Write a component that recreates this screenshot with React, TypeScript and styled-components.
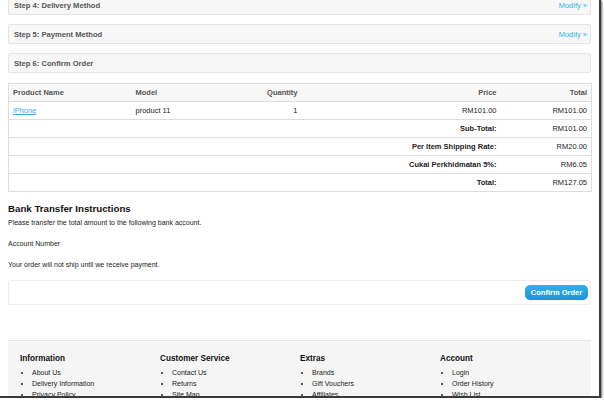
import React from "react";
import styled, { createGlobalStyle } from "styled-components";

const Global = createGlobalStyle`
  html, body { margin: 0; padding: 0; background: #ffffff; }
  body { font-family: "Liberation Sans", Arial, sans-serif; color: #333; }
`;

const Frame = styled.div`
  width: 601px;
  height: 398px;
  overflow: hidden;
  background: #fff;
  box-sizing: border-box;
  border-right: 2px solid #3a3a3a;
  border-bottom: 2px solid #3a3a3a;
  box-shadow: 1px 1px 2px rgba(0, 0, 0, 0.6);
`;

const Page = styled.div`
  margin-top: -5px;
  padding: 0 8px 0 8px;
  display: flex;
  flex-direction: column;
`;

const StepPanel = styled.div`
  height: 20px;
  box-sizing: border-box;
  background: #f7f7f7;
  border: 1px solid #e4e4e4;
  border-radius: 2px;
  display: flex;
  align-items: center;
  justify-content: space-between;
  padding: 0 3px 0 5px;
  margin-bottom: 9px;
`;

const StepTitle = styled.span`
  font-size: 7.6px;
  font-weight: bold;
  color: #555;
`;

const Modify = styled.span`
  font-size: 7.5px;
  color: #38b0e3;
`;

const Table = styled.table`
  width: 583px;
  border-collapse: collapse;
  border: 1px solid #dddddd;
  margin-top: 1px;
  font-size: 7.5px;
  table-layout: fixed;
`;

const Th = styled.td<{ $align?: string }>`
  height: 17px;
  padding: 0 4px;
  background: #f7f7f7;
  color: #555;
  font-weight: bold;
  text-align: ${(p) => p.$align || "left"};
  border-bottom: 1px solid #dddddd;
`;

const Td = styled.td<{ $align?: string; $bold?: boolean }>`
  height: 17px;
  padding: 0 4px;
  color: #222;
  font-weight: ${(p) => (p.$bold ? "bold" : "normal")};
  text-align: ${(p) => p.$align || "left"};
  border-bottom: 1px solid #dddddd;
`;

const ProductLink = styled.a`
  color: #38b0e3;
  text-decoration: underline;
`;

const BankTitle = styled.h2`
  margin: 11px 0 0 0;
  font-size: 9.7px;
  font-weight: bold;
  color: #111;
`;

const Para = styled.p<{ $gap?: number }>`
  margin: ${(p) => p.$gap ?? 0}px 0 0 0;
  font-size: 7px;
  color: #222;
`;

const Buttons = styled.div`
  margin-top: 12px;
  height: 25px;
  box-sizing: border-box;
  border: 1px solid #eeeeee;
  border-radius: 2px;
  display: flex;
  align-items: center;
  justify-content: flex-end;
  padding-right: 2px;
`;

const ConfirmButton = styled.button`
  height: 15px;
  width: 63px;
  padding: 0;
  border: none;
  border-radius: 5px;
  background: linear-gradient(#33b1ea, #1a94d6);
  color: #fff;
  font-family: "Liberation Sans", Arial, sans-serif;
  font-size: 7.5px;
  font-weight: bold;
`;

const Footer = styled.div`
  margin-top: 35px;
  background: #f5f5f5;
  border-top: 1px solid #e6e6e6;
  padding: 13px 12px 0 12px;
  display: grid;
  grid-template-columns: repeat(4, 140px);
  height: 80px;
`;

const FooterCol = styled.div`
  display: flex;
  flex-direction: column;
`;

const FooterTitle = styled.h3`
  margin: 0 0 4px 0;
  font-size: 8.2px;
  font-weight: bold;
  color: #111;
`;

const FooterList = styled.ul`
  margin: 0;
  padding-left: 12px;
  list-style: disc;
  font-size: 7px;
  color: #222;
  li {
    line-height: 11px;
  }
`;

const footer = [
  { title: "Information", items: ["About Us", "Delivery Information", "Privacy Policy"] },
  { title: "Customer Service", items: ["Contact Us", "Returns", "Site Map"] },
  { title: "Extras", items: ["Brands", "Gift Vouchers", "Affiliates"] },
  { title: "Account", items: ["Login", "Order History", "Wish List"] },
];

const totals = [
  ["Sub-Total:", "RM101.00"],
  ["Per Item Shipping Rate:", "RM20.00"],
  ["Cukai Perkhidmatan 5%:", "RM6.05"],
  ["Total:", "RM127.05"],
];

export default function App() {
  return (
    <>
      <Global />
      <Frame>
        <Page>
          <StepPanel>
            <StepTitle>Step 4: Delivery Method</StepTitle>
            <Modify>Modify »</Modify>
          </StepPanel>
          <StepPanel>
            <StepTitle>Step 5: Payment Method</StepTitle>
            <Modify>Modify »</Modify>
          </StepPanel>
          <StepPanel>
            <StepTitle>Step 6: Confirm Order</StepTitle>
          </StepPanel>
          <Table>
            <colgroup>
              <col style={{ width: 123 }} />
              <col style={{ width: 100 }} />
              <col style={{ width: 70 }} />
              <col style={{ width: 199 }} />
              <col style={{ width: 91 }} />
            </colgroup>
            <thead>
              <tr>
                <Th>Product Name</Th>
                <Th>Model</Th>
                <Th $align="right">Quantity</Th>
                <Th $align="right">Price</Th>
                <Th $align="right">Total</Th>
              </tr>
            </thead>
            <tbody>
              <tr>
                <Td>
                  <ProductLink>iPhone</ProductLink>
                </Td>
                <Td>product 11</Td>
                <Td $align="right">1</Td>
                <Td $align="right">RM101.00</Td>
                <Td $align="right">RM101.00</Td>
              </tr>
              {totals.map(([label, value]) => (
                <tr key={label}>
                  <Td colSpan={4} $align="right" $bold>
                    {label}
                  </Td>
                  <Td $align="right">{value}</Td>
                </tr>
              ))}
            </tbody>
          </Table>
          <BankTitle>Bank Transfer Instructions</BankTitle>
          <Para $gap={5}>Please transfer the total amount to the following bank account.</Para>
          <Para $gap={14}>Account Number</Para>
          <Para $gap={14}>Your order will not ship until we receive payment.</Para>
          <Buttons>
            <ConfirmButton>Confirm Order</ConfirmButton>
          </Buttons>
          <Footer>
            {footer.map((c) => (
              <FooterCol key={c.title}>
                <FooterTitle>{c.title}</FooterTitle>
                <FooterList>
                  {c.items.map((i) => (
                    <li key={i}>{i}</li>
                  ))}
                </FooterList>
              </FooterCol>
            ))}
          </Footer>
        </Page>
      </Frame>
    </>
  );
}
